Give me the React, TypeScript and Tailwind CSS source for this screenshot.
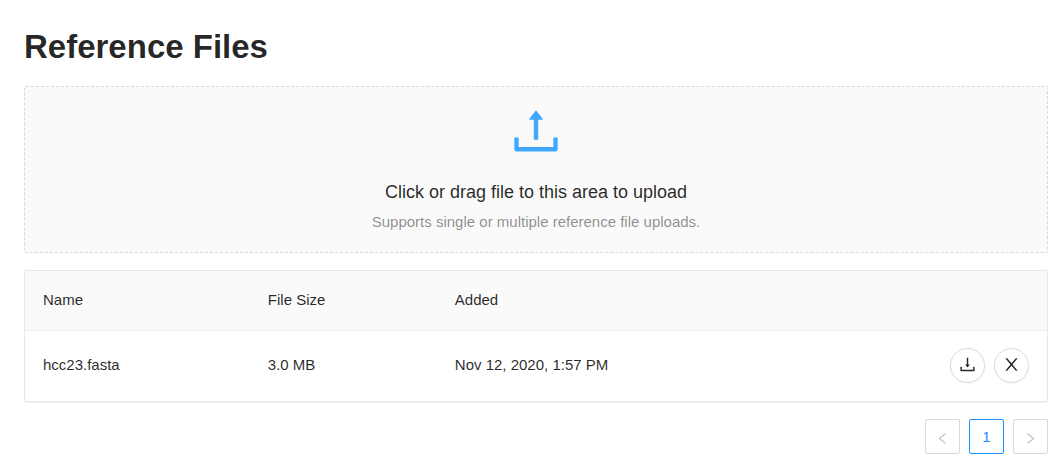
import React from "react";

const paths = {
  upload:
    "M400 317.7h73.9V656c0 4.4 3.6 8 8 8h60c4.4 0 8-3.6 8-8V317.7H624c6.7 0 10.4-7.7 6.3-12.9L518.3 163a8 8 0 00-12.6 0l-112 141.7c-4.1 5.3-.4 13 6.3 13zM878 626h-60c-4.4 0-8 3.6-8 8v154H214V634c0-4.4-3.6-8-8-8h-60c-4.4 0-8 3.6-8 8v198c0 17.7 14.3 32 32 32h684c17.7 0 32-14.3 32-32V634c0-4.4-3.6-8-8-8z",
  download:
    "M505.7 661a8 8 0 0012.6 0l112-141.7c4.1-5.2.4-12.9-6.3-12.9h-74.1V168c0-4.4-3.6-8-8-8h-60c-4.4 0-8 3.6-8 8v338.3H400c-6.7 0-10.4 7.7-6.3 12.9l112 141.8zM878 626h-60c-4.4 0-8 3.6-8 8v154H214V634c0-4.4-3.6-8-8-8h-60c-4.4 0-8 3.6-8 8v198c0 17.7 14.3 32 32 32h684c17.7 0 32-14.3 32-32V634c0-4.4-3.6-8-8-8z",
  close:
    "M563.8 512l262.5-312.9c4.4-5.2.7-13.1-6.1-13.1h-79.8c-4.7 0-9.2 2.1-12.3 5.7L511.6 449.8 295.1 191.7c-3-3.6-7.5-5.7-12.3-5.7H203c-6.8 0-10.5 7.9-6.1 13.1L459.4 512 196.9 824.9A7.95 7.95 0 00203 838h79.8c4.7 0 9.2-2.1 12.3-5.7l216.5-258.1 216.5 258.1c3 3.6 7.5 5.7 12.3 5.7h79.8c6.8 0 10.5-7.9 6.1-13.1L563.8 512z",
  left: "M724 218.3V141c0-6.7-7.7-10.4-12.9-6.3L260.3 486.8a31.86 31.86 0 000 50.3l450.8 352.1c5.3 4.1 12.9.4 12.9-6.3v-77.3c0-4.9-2.3-9.6-6.1-12.6l-360-281 360-281.1c3.8-3 6.1-7.7 6.1-12.6z",
  right:
    "M765.7 486.8L314.9 134.7A7.97 7.97 0 00302 141v77.3c0 4.9 2.3 9.6 6.1 12.6l360 281.1-360 281.1c-3.9 3-6.1 7.7-6.1 12.6V883c0 6.7 7.7 10.4 12.9 6.3l450.8-352.1a31.96 31.96 0 000-50.4z",
};

function Icon({ name, className }: { name: keyof typeof paths; className: string }) {
  return (
    <svg viewBox="64 64 896 896" fill="currentColor" aria-hidden="true" className={className}>
      <path d={paths[name]} />
    </svg>
  );
}

const files = [{ name: "hcc23.fasta", size: "3.0 MB", added: "Nov 12, 2020, 1:57 PM" }];

const roundButton =
  "flex size-[35px] items-center justify-center rounded-full border border-[#d9d9d9] bg-white pb-0.5 shadow-[0_2px_0_rgba(0,0,0,0.02)]";
const pageButton = "flex size-[35px] items-center justify-center rounded-xs border bg-white";
const arrowButton = `${pageButton} border-[#d9d9d9] pt-1 text-black/25`;

export default function App() {
  return (
    <main className="bg-white pt-7 pr-2 pb-2 pl-6 font-['Liberation_Sans',Arial,sans-serif] text-[15px] leading-6 text-black/85">
      <h1 className="mb-5 text-[33px] leading-[38px] font-bold">Reference Files</h1>

      <button
        type="button"
        className="flex w-full flex-col items-center rounded-xs border border-dashed border-[#d9d9d9] bg-[#fafafa] pt-[18px] pb-[18px]"
      >
        <Icon name="upload" className="mb-[22px] size-[52px] text-[#40a9ff]" />
        <span className="mb-[5px] text-lg leading-[26px]">Click or drag file to this area to upload</span>
        <span className="text-black/45">Supports single or multiple reference file uploads.</span>
      </button>

      <div className="mt-[17px] overflow-hidden rounded-xs border border-[#e8e8e8] pb-px shadow-[0_1px_0_#f0f0f0]">
        <table className="w-full table-fixed border-collapse text-left">
          <thead>
            <tr className="h-[59px] border-b border-[#efefef] bg-[#fafafa]">
              <th className="w-[22%] pl-[18px] font-normal">Name</th>
              <th className="w-[187px] pl-[18px] font-normal">File Size</th>
              <th className="pl-[18px] font-normal">Added</th>
              <th className="w-[120px]" aria-label="Actions" />
            </tr>
          </thead>
          <tbody>
            {files.map((file) => (
              <tr key={file.name} className="h-[70px]">
                <td className="pl-[18px]">{file.name}</td>
                <td className="pl-[18px]">{file.size}</td>
                <td className="pl-[18px]">{file.added}</td>
                <td className="pr-[18px]">
                  <div className="flex justify-end gap-[9px]">
                    <button type="button" aria-label="Download" className={roundButton}>
                      <Icon name="download" className="size-[17px]" />
                    </button>
                    <button type="button" aria-label="Remove" className={roundButton}>
                      <Icon name="close" className="size-[17px]" />
                    </button>
                  </div>
                </td>
              </tr>
            ))}
          </tbody>
        </table>
      </div>

      <nav aria-label="Pagination" className="mt-[17px] flex justify-end gap-[9px]">
        <button type="button" disabled aria-label="Previous page" className={arrowButton}>
          <Icon name="left" className="size-[13px]" />
        </button>
        <button type="button" aria-current="page" className={`${pageButton} border-[#1890ff] text-[#1890ff]`}>
          1
        </button>
        <button type="button" disabled aria-label="Next page" className={arrowButton}>
          <Icon name="right" className="size-[13px]" />
        </button>
      </nav>
    </main>
  );
}
